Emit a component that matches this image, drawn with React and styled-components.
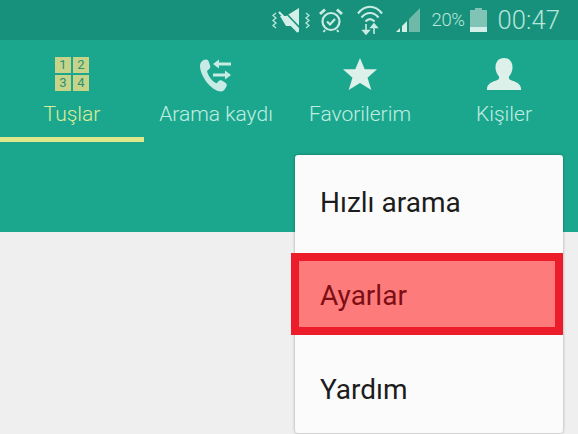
import { createGlobalStyle, styled } from "styled-components";

const Global = createGlobalStyle`
  html, body { margin: 0; padding: 0; }
  body {
    width: 578px;
    height: 434px;
    overflow: hidden;
    background: #efefef;
    font-family: Roboto, "Liberation Sans", sans-serif;
  }
`;

const Screen = styled.div`
  position: relative;
  width: 578px;
  height: 434px;
  overflow: hidden;
  background: #efefef;
`;

const StatusBar = styled.div`
  height: 40px;
  background: #17917b;
  display: flex;
  align-items: center;
  justify-content: flex-end;
  padding-right: 18px;
  color: #b9e6dc;
`;

const StatusIcon = styled.div`
  display: flex;
  margin-left: ${(p) => p.$gap}px;
`;

const Percent = styled.span`
  font-size: 18.5px;
  font-weight: 300;
  letter-spacing: -0.4px;
  margin-left: 11px;
`;

const Clock = styled.span`
  font-size: 25.5px;
  font-weight: 300;
  margin-left: 11px;
  letter-spacing: 0.1px;
`;

const Header = styled.div`
  height: 192px;
  background: #1ba78d;
`;

const Tabs = styled.div`
  display: grid;
  grid-template-columns: repeat(4, 144px);
  height: 102px;
`;

const Tab = styled.div`
  display: flex;
  flex-direction: column;
  align-items: center;
  padding-top: 16px;
  box-sizing: border-box;
  height: 102px;
  border-bottom: 5px solid ${(p) => (p.$active ? "#dfe88a" : "transparent")};
  color: ${(p) => (p.$active ? "#dcec98" : "#c0ede2")};
`;

const IconSlot = styled.div`
  height: 36px;
  display: flex;
  align-items: center;
  justify-content: center;
`;

const TabLabel = styled.div`
  margin-top: 10px;
  font-size: 21px;
  font-weight: 300;
  line-height: 24px;
  white-space: nowrap;
`;

const DialGrid = styled.div`
  display: grid;
  grid-template-columns: 16px 16px;
  grid-auto-rows: 16px;
  gap: 2px;
`;

const DialKey = styled.div`
  background: #c5d488;
  color: #2a9079;
  font-size: 13px;
  font-weight: 400;
  line-height: 16px;
  text-align: center;
`;

const Menu = styled.div`
  position: absolute;
  left: 295px;
  top: 155px;
  width: 268px;
  height: 278px;
  background: #fbfbfb;
  border-radius: 3px;
  box-shadow: 0 0 3px rgba(0, 0, 0, 0.35);
  display: flex;
  flex-direction: column;
`;

const MenuItem = styled.div`
  box-sizing: border-box;
  height: ${(p) => p.$height}px;
  flex: none;
  display: flex;
  align-items: center;
  padding-left: 25px;
  padding-top: ${(p) => p.$drop || 0}px;
  padding-bottom: ${(p) => p.$lift || 0}px;
  font-size: 28px;
  color: #1c1c1c;
`;

const MenuItemMarked = styled(MenuItem)`
  margin-left: -4px;
  padding-left: 21px;
  border: 8px solid #ed1c2a;
  background: #fe7b7c;
  color: #7d0f14;
`;

const Speaker = () => (
  <svg width="38" height="26" viewBox="0 0 38 26" fill="none">
    <path d="M4 6L1 8.500l3 2.500-3 2.500 3 2.500-3 2.500 3 2.500" stroke="#b9e6dc" strokeWidth="1.300" />
    <path d="M34 6l3 2.500-3 2.500 3 2.500-3 2.500 3 2.500-3 2.500" stroke="#b9e6dc" strokeWidth="1.300" />
    <path d="M27 1v24l-8-6h-5L8 9h6z" fill="#d4efe8" />
    <path d="M10 2l20 21" stroke="#17917b" strokeWidth="1.600" />
    <path d="M7 5l19 20" stroke="#d4efe8" strokeWidth="2" />
  </svg>
);

const Alarm = () => (
  <svg width="26" height="26" viewBox="0 0 26 26" fill="none" stroke="#c8ebe3">
    <circle cx="13" cy="14.500" r="8.500" strokeWidth="2.200" />
    <path d="M9 14.500l3 3 5-5.500" strokeWidth="2.200" />
    <path d="M2 7l5-4.500M24 7l-5-4.500" strokeWidth="3" />
    <path d="M7 23l-1.500 2M19 23l1.500 2" strokeWidth="2" />
  </svg>
);

const Wifi = () => (
  <svg width="28" height="30" viewBox="0 0 28 30" fill="none" stroke="#c8ebe3" strokeWidth="2.200">
    <path d="M2 8.500C9-.5 19-.5 26 8.500" />
    <path d="M5.500 12.500c5-6 12-6 17 0" />
    <path d="M9.500 16.500c3-3.200 6-3.200 9 0" />
    <path d="M10 19v10M7 25.500l3 3.500 3-3.500z" strokeWidth="1.600" fill="#c8ebe3" />
    <path d="M18 29V19M15 22.500l3-3.500 3 3.500z" strokeWidth="1.600" fill="#c8ebe3" />
  </svg>
);

const Signal = () => (
  <svg width="26" height="26" viewBox="0 0 26 26">
    <path d="M1 25l4-4v4z" fill="#d4efe8" />
    <path d="M7 19l5-5v11H7z" fill="#d4efe8" />
    <path d="M14 12L25 1v24H14z" fill="#6fb9a9" />
  </svg>
);

const Battery = () => (
  <svg width="17" height="26" viewBox="0 0 17 26">
    <path d="M5 1h7v2h5v22H0V3h5z" fill="#7fc4b4" />
    <rect x="0" y="20" width="17" height="5" fill="#d4efe8" />
  </svg>
);

const PhoneLog = () => (
  <svg width="34" height="36" viewBox="0 0 34 36" fill="#c9ebe5">
    <path d="M7 3.500c1.300 0 2.300.8 2.700 2l1.500 4.500c.4 1.200 0 2.100-1 2.900l-1.700 1.600c-.5.4-.5.9-.3 1.500 1.400 4.600 4.400 8.600 8.500 11 .6.3 1 .3 1.500-.2l1.500-1.700c.9-.9 2-1.100 3.100-.5l3.600 2.200c1.300.8 1.700 2.200 1.100 3.500-1 2.200-2.800 5.200-5.300 5.200C12 35 1 19.500 1 10 1 6.500 3.500 3.500 7 3.500z" />
    <path d="M14 8l6-4.500v3h12v3H20v3z" />
    <path d="M32 19l-6 4.500v-3H14v-3h12v-3z" />
  </svg>
);

const Star = () => (
  <svg width="34" height="36" viewBox="0 0 36 36" fill="#def0ea">
    <path d="M18 1l5 12h13l-10 9 4 13-12-7.500L6 35l4-13L0 13h13z" />
  </svg>
);

const Person = () => (
  <svg width="36" height="36" viewBox="0 0 38 36" fill="#def0ea">
    <path d="M19 1c6 0 9 4.500 9 10 0 4-1.500 7-3.500 9.500-.8 1.500-.3 3 1.500 3.800 5 1.800 11 3.700 11 9.700v1H1v-1c0-6 6-7.900 11-9.700 1.800-.8 2.300-2.300 1.500-3.800C11.500 18 10 15 10 11c0-5.500 3-10 9-10z" />
  </svg>
);

const App = () => {
  return (
    <Screen>
      <Global />
      <StatusBar>
        <StatusIcon $gap={0}><Speaker /></StatusIcon>
        <StatusIcon $gap={8}><Alarm /></StatusIcon>
        <StatusIcon $gap={12}><Wifi /></StatusIcon>
        <StatusIcon $gap={11}><Signal /></StatusIcon>
        <Percent>20%</Percent>
        <StatusIcon $gap={5}><Battery /></StatusIcon>
        <Clock>00:47</Clock>
      </StatusBar>
      <Header>
        <Tabs>
          <Tab $active>
            <IconSlot>
              <DialGrid>
                <DialKey>1</DialKey>
                <DialKey>2</DialKey>
                <DialKey>3</DialKey>
                <DialKey>4</DialKey>
              </DialGrid>
            </IconSlot>
            <TabLabel>Tuşlar</TabLabel>
          </Tab>
          <Tab>
            <IconSlot><PhoneLog /></IconSlot>
            <TabLabel>Arama kaydı</TabLabel>
          </Tab>
          <Tab>
            <IconSlot><Star /></IconSlot>
            <TabLabel>Favorilerim</TabLabel>
          </Tab>
          <Tab>
            <IconSlot><Person /></IconSlot>
            <TabLabel>Kişiler</TabLabel>
          </Tab>
        </Tabs>
      </Header>
      <Menu>
        <MenuItem $height={98} $lift={3}>Hızlı arama</MenuItem>
        <MenuItemMarked $height={82} $drop={2}>Ayarlar</MenuItemMarked>
        <MenuItem $height={98} $drop={10}>Yardım</MenuItem>
      </Menu>
    </Screen>
  );
};

export default App;
